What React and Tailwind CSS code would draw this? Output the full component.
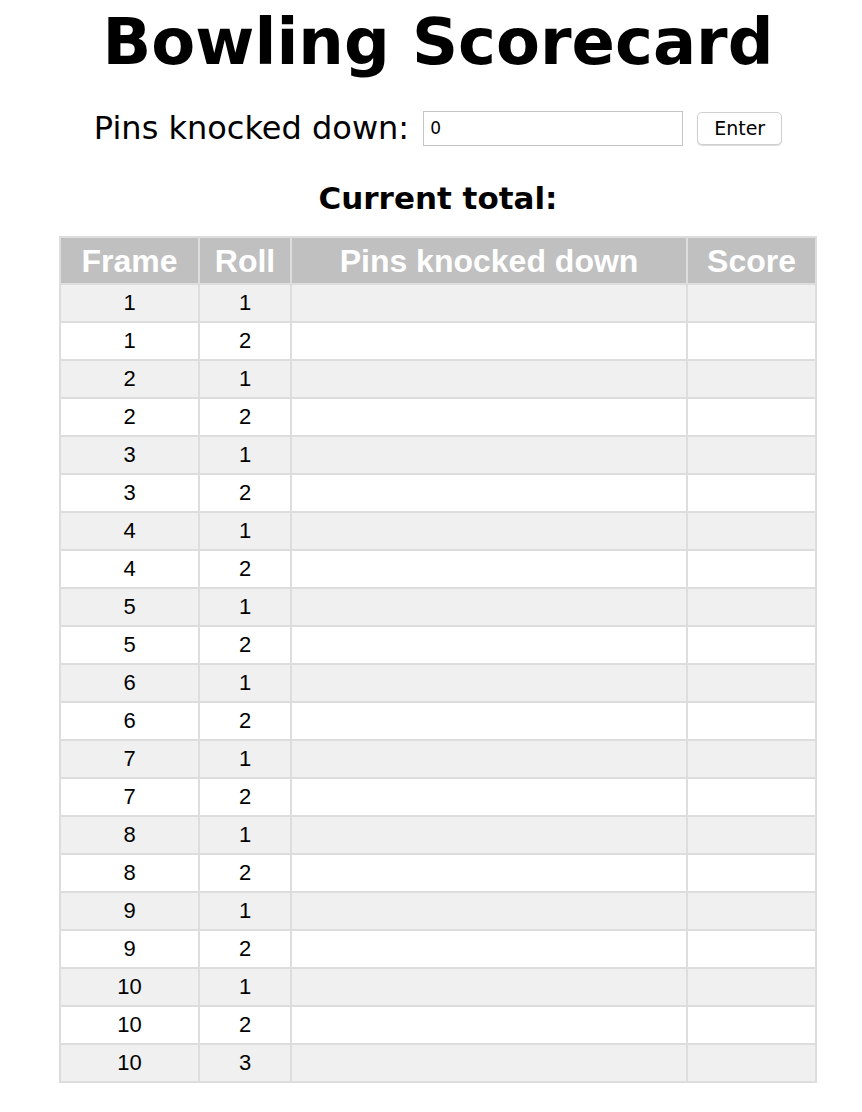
import { useState } from 'react';

const rows = [];
for (let f = 1; f <= 10; f++) {
  rows.push({ frame: f, roll: 1 });
  rows.push({ frame: f, roll: 2 });
  if (f === 10) rows.push({ frame: f, roll: 3 });
}

export default function App() {
  const [pins, setPins] = useState('0');

  return (
    <div className="min-h-screen bg-white pl-[14px] font-['DejaVu_Sans',Verdana,sans-serif] text-black">
      <h1 className="pt-[2px] text-center text-[64px] font-bold leading-[80px]">
        Bowling Scorecard
      </h1>

      <div className="mt-[27px] flex h-[38px] items-center justify-center">
        <label className="text-[32px] leading-[38px]">Pins knocked down:</label>
        <input
          type="text"
          value={pins}
          onChange={(e) => setPins(e.target.value)}
          className="ml-[14px] h-[35px] w-[260px] border border-[#c4c4c4] px-[6px] text-[17px] outline-none"
        />
        <button className="ml-[14px] h-[33px] rounded-[5px] border border-[#cfcfcf] bg-white px-[16px] text-[19px] shadow-[0_1px_1px_rgba(0,0,0,0.15)]">
          Enter
        </button>
      </div>

      <h2 className="mt-[32px] text-center text-[31px] font-bold leading-[38px]">
        Current total:
      </h2>

      <table className="mx-auto mt-[19px] w-[758px] border-collapse font-['Liberation_Sans',Arial,sans-serif]">
        <thead>
          <tr className="h-[47px] bg-[#c0c0c0] text-[32px] font-bold leading-[36px] text-white">
            <th className="w-[139px] border-2 border-[#dddddd]">Frame</th>
            <th className="w-[92px] border-2 border-[#dddddd]">Roll</th>
            <th className="w-[396px] border-2 border-[#dddddd]">Pins knocked down</th>
            <th className="border-2 border-[#dddddd]">Score</th>
          </tr>
        </thead>
        <tbody>
          {rows.map((r, i) => (
            <tr
              key={i}
              className={`h-[38px] text-[22px] leading-[26px] ${i % 2 === 0 ? 'bg-[#f0f0f0]' : 'bg-white'}`}
            >
              <td className="border-2 border-[#dddddd] text-center">{r.frame}</td>
              <td className="border-2 border-[#dddddd] text-center">{r.roll}</td>
              <td className="border-2 border-[#dddddd]"></td>
              <td className="border-2 border-[#dddddd]"></td>
            </tr>
          ))}
        </tbody>
      </table>
    </div>
  );
}
